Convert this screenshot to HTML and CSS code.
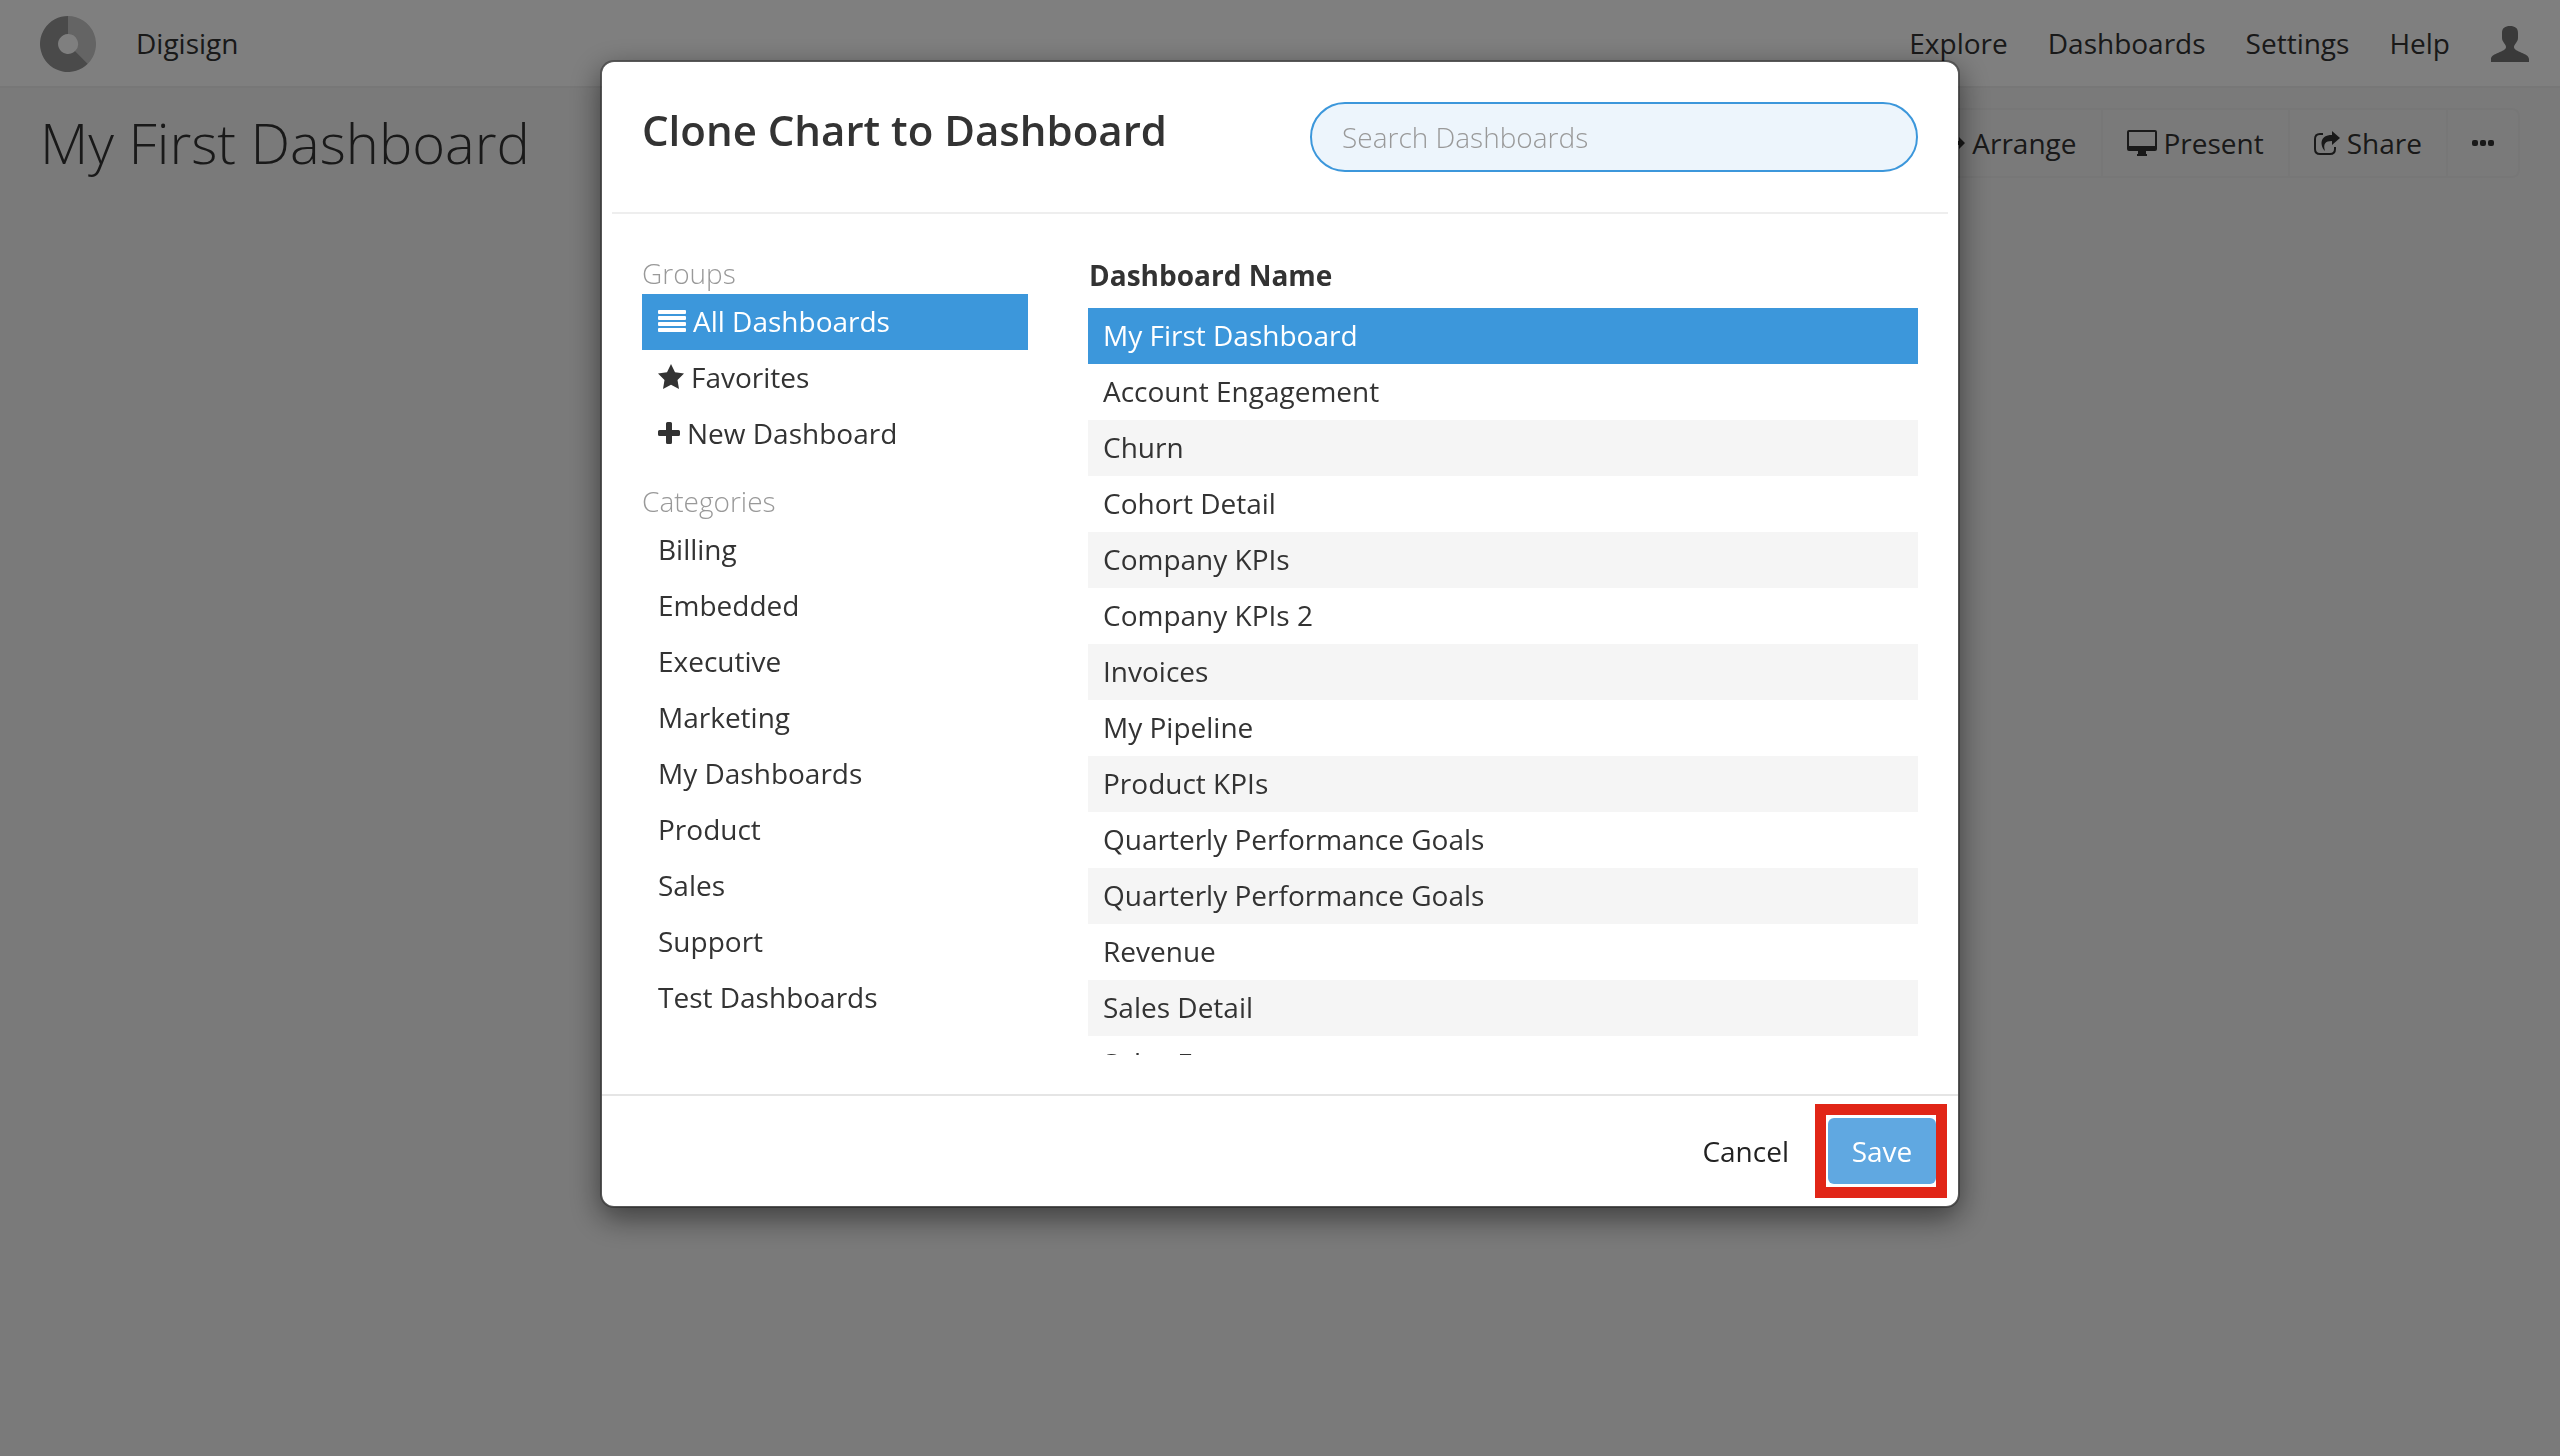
FILE: index.html
```
<!DOCTYPE html>
<html lang="en">
<head>
<meta charset="utf-8">
<title>My First Dashboard</title>
<link rel="stylesheet" href="styles.css">
</head>
<body>
<div class="page">
  <header class="topbar">
    <a class="logo" href="#" aria-label="Home">
      <svg width="56" height="56" viewBox="0 0 56 56"><path fill="#c8c8c8" d="M28 0A28 28 0 0 1 47.800 47.800L35.100 35.100A10 10 0 0 0 28 18Z"/><path fill="#949494" d="M28 0A28 28 0 1 0 47.800 47.800L35.100 35.100A10 10 0 1 1 28 18Z"/></svg>
    </a>
    <span class="org">Digisign</span>
    <nav class="nav">
      <a href="#">Explore</a>
      <a href="#">Dashboards</a>
      <a href="#">Settings</a>
      <a href="#">Help</a>
      <a class="user" href="#" aria-label="Account">
        <svg width="38" height="36" viewBox="0 0 38 36"><path d="M19 0c5 0 8 2 8 7v5c0 4-4 6-4 9 0 5 15 6 15 12v3H0v-3c0-6 15-7 15-12 0-3-4-5-4-9V7c0-5 3-7 8-7z"/></svg>
      </a>
    </nav>
  </header>
  <main class="heading">
    <h1>My First Dashboard</h1>
    <div class="toolbar">
      <button type="button"><svg width="28" height="28" viewBox="0 0 28 28"><path d="M14 0l6 6h-4v6h6V8l6 6-6 6v-4h-6v6h4l-6 6-6-6h4v-6H6v4l-6-6 6-6v4h6V6H8z"/></svg>Arrange</button>
      <button type="button"><svg width="30" height="26" viewBox="0 0 30 26"><path fill-rule="evenodd" d="M2 0h26q2 0 2 2v17q0 2-2 2H19v3h1v2H10v-2h1v-3H2q-2 0-2-2V2q0-2 2-2zM2 2v14h26V2z"/></svg>Present</button>
      <button type="button"><svg width="26" height="24" viewBox="0 0 26 24"><path d="M18 0l8 7-8 7v-4c-7 0-9 3-7 10-5-5-6-16 7-16z"/><path fill="none" stroke="currentColor" stroke-width="2" d="M9 3H6Q1 3 1 8v10q0 5 5 5h10q5 0 5-5v-2"/></svg>Share</button>
      <button type="button" class="more" aria-label="More"><svg width="22" height="6" viewBox="0 0 22 6"><rect width="6" height="6" rx="2"/><rect x="8" width="6" height="6" rx="2"/><rect x="16" width="6" height="6" rx="2"/></svg></button>
    </div>
  </main>
</div>
<div class="backdrop">
  <section class="modal" role="dialog" aria-labelledby="modal-title">
    <header class="modal-header">
      <h2 id="modal-title">Clone Chart to Dashboard</h2>
      <input class="search" type="text" placeholder="Search Dashboards" aria-label="Search Dashboards">
    </header>
    <div class="modal-body">
      <div class="groups">
        <h3>Groups</h3>
        <ul>
          <li><a class="active" href="#"><svg width="28" height="22" viewBox="0 0 28 22"><rect width="28" height="4" rx="1"/><rect y="6" width="28" height="4" rx="1"/><rect y="12" width="28" height="4" rx="1"/><rect y="18" width="28" height="4" rx="1"/></svg>All Dashboards</a></li>
          <li><a href="#"><svg width="26" height="25" viewBox="0 0 26 25"><path d="M13 0l4 8.200 9 1.300-6.500 6.400L21 25l-8-4.300L5 25l1.500-9.100L0 9.500l9-1.300z"/></svg>Favorites</a></li>
          <li><a href="#"><svg width="22" height="22" viewBox="0 0 22 22"><path d="M9.500 0h3q1.500 0 1.500 1.500V8h6.500Q22 8 22 9.500v3q0 1.500-1.500 1.500H14v6.500q0 1.500-1.500 1.500h-3Q8 22 8 20.500V14H1.500Q0 14 0 12.500v-3Q0 8 1.500 8H8V1.500Q8 0 9.500 0z"/></svg>New Dashboard</a></li>
        </ul>
        <h3>Categories</h3>
        <ul>
          <li><a href="#">Billing</a></li>
          <li><a href="#">Embedded</a></li>
          <li><a href="#">Executive</a></li>
          <li><a href="#">Marketing</a></li>
          <li><a href="#">My Dashboards</a></li>
          <li><a href="#">Product</a></li>
          <li><a href="#">Sales</a></li>
          <li><a href="#">Support</a></li>
          <li><a href="#">Test Dashboards</a></li>
        </ul>
      </div>
      <div class="list">
        <table>
          <thead><tr><th scope="col">Dashboard Name</th></tr></thead>
          <tbody>
            <tr class="selected"><td>My First Dashboard</td></tr>
            <tr><td>Account Engagement</td></tr>
            <tr><td>Churn</td></tr>
            <tr><td>Cohort Detail</td></tr>
            <tr><td>Company KPIs</td></tr>
            <tr><td>Company KPIs 2</td></tr>
            <tr><td>Invoices</td></tr>
            <tr><td>My Pipeline</td></tr>
            <tr><td>Product KPIs</td></tr>
            <tr><td>Quarterly Performance Goals</td></tr>
            <tr><td>Quarterly Performance Goals</td></tr>
            <tr><td>Revenue</td></tr>
            <tr><td>Sales Detail</td></tr>
            <tr><td>Sales Forecast</td></tr>
          </tbody>
        </table>
      </div>
    </div>
    <footer class="modal-footer">
      <button type="button" class="cancel">Cancel</button>
      <span class="highlight"><button type="submit" class="save">Save</button></span>
    </footer>
  </section>
</div>
</body>
</html>
```
FILE: styles.css
```
* {
  box-sizing: border-box;
}

body {
  margin: 0;
  background: #f5f5f5;
  color: #333;
  font: 28px/40px "Open Sans", sans-serif;
}

a {
  color: inherit;
  text-decoration: none;
}

button {
  border: 0;
  background: none;
  color: inherit;
  font: inherit;
}

svg {
  display: block;
  flex: none;
  fill: currentColor;
}

h1, h2, h3, ul {
  margin: 0;
  padding: 0;
  font-weight: 400;
}

ul {
  list-style: none;
}

.topbar {
  display: flex;
  align-items: center;
  height: 88px;
  padding: 0 31px 0 40px;
  border-bottom: 2px solid #eee;
  background: #fff;
}

.logo,
.user {
  padding-top: 2px;
}

.org {
  margin-left: 40px;
}

.nav {
  display: flex;
  align-items: center;
  gap: 40px;
  margin-left: auto;
}

.user {
  margin-left: 1px;
  color: #757575;
}

.heading {
  display: flex;
  align-items: center;
  justify-content: space-between;
  padding: 20px 40px;
}

h1 {
  padding-bottom: 2px;
  font-size: 56px;
  font-weight: 300;
  line-height: 68px;
}

.toolbar {
  display: flex;
  height: 70px;
  border: 2px solid #eee;
  border-radius: 8px;
}

.toolbar button {
  display: flex;
  align-items: center;
  gap: 7px;
  padding: 0 24px;
}

.toolbar button + button {
  border-left: 2px solid #eee;
}

.backdrop {
  position: fixed;
  inset: 0;
  padding: 60px 24px;
  background: rgba(0, 0, 0, 0.5);
}

.modal {
  max-width: 1360px;
  margin: 0 auto;
  border: 2px solid rgba(0, 0, 0, 0.3);
  border-radius: 14px;
  background: #fff;
  background-clip: padding-box;
  box-shadow: 0 10px 30px rgba(0, 0, 0, 0.5);
}

.modal-header {
  display: flex;
  align-items: flex-start;
  justify-content: space-between;
  margin: 0 10px;
  padding: 40px 30px;
  border-bottom: 2px solid #eee;
}

h2 {
  font-size: 42px;
  font-weight: 600;
  line-height: 56px;
}

.search {
  width: 608px;
  height: 70px;
  padding: 0 30px;
  border: 2px solid #3c97db;
  border-radius: 35px;
  background: #edf5fc;
  font: inherit;
}

.search::placeholder {
  color: #999;
  font-weight: 300;
}

.modal-body {
  display: grid;
  grid-template-columns: 386px 1fr;
  gap: 60px;
  height: 880px;
  padding: 40px 40px 39px;
}

.groups h3 {
  padding-bottom: 2px;
  color: #999;
  font-size: 28px;
  font-weight: 300;
  line-height: 38px;
}

.groups ul + h3 {
  margin-top: 20px;
}

.groups a {
  display: flex;
  align-items: center;
  gap: 7px;
  height: 56px;
  padding: 0 16px 3px;
}

.groups .active {
  background: #3c97db;
  color: #fff;
}

.list {
  overflow: hidden;
}

table {
  width: 100%;
  border-collapse: collapse;
}

th {
  height: 54px;
  padding: 0 1px 12px;
  font-weight: 700;
  text-align: left;
}

td {
  height: 56px;
  padding: 0 15px 3px;
}

tbody tr:nth-child(odd) {
  background: #f5f5f5;
}

tbody tr.selected {
  background: #3c97db;
  color: #fff;
}

.modal-footer {
  display: flex;
  align-items: center;
  justify-content: flex-end;
  height: 112px;
  padding-right: 11px;
  border-top: 2px solid #e5e5e5;
}

.cancel {
  padding: 0 26px;
  color: #222;
}

.highlight {
  padding: 3px 0 3px 2px;
  border: 11px solid #e12617;
}

.save {
  display: block;
  width: 108px;
  height: 66px;
  padding: 0;
  border-radius: 6px;
  background: #60a8e1;
  color: #fff;
}
```
